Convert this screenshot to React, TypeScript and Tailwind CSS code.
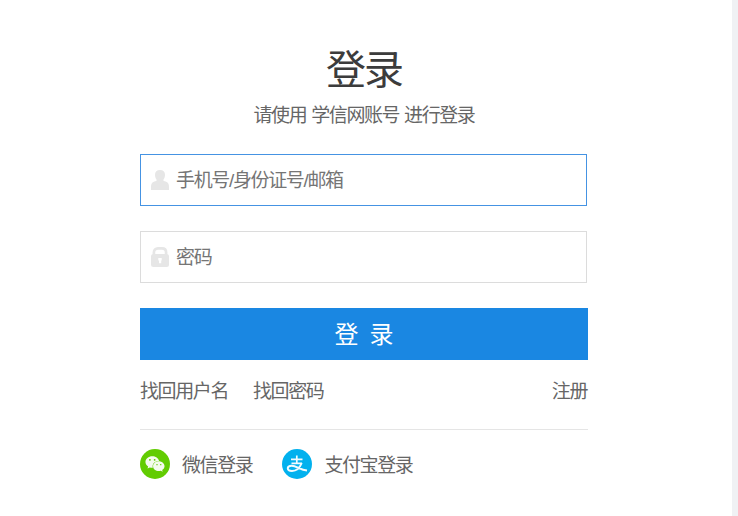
import type { ReactNode } from "react";
import { FaWeixin } from "react-icons/fa";

function UserIcon() {
  return (
    <svg className="h-5 w-[18px]" viewBox="0 0 18 20" fill="#e6e6e6">
      <path d="M9 0C12.200 0 14 2 14 4.800c0 2.300-.7 4-1.800 5.200.2.900 1 1.100 2.400 1.500C17.200 12.200 18 14 18 17v3H0v-3c0-3 .8-4.800 3.400-5.500 1.400-.4 2.200-.6 2.400-1.500C4.700 8.800 4 7.100 4 4.800 4 2 5.800 0 9 0Z" />
    </svg>
  );
}

function LockIcon() {
  return (
    <svg className="h-5 w-[18px]" viewBox="0 0 18 20">
      <path d="M2.900 9V5.500C2.900 3 4.500 1.400 7 1.400h4c2.500 0 4.100 1.600 4.100 4.100V9" fill="none" stroke="#e6e6e6" strokeWidth="2.700" />
      <rect y="7" width="18" height="13" rx="2.500" fill="#e6e6e6" />
      <path d="M7.300 11h3.400v2.200l-.5.500v2.600H8v-2.600l-.7-.5Z" fill="#fff" />
    </svg>
  );
}

function WechatIcon() {
  return (
    <span className="flex size-[30px] items-center justify-center rounded-full bg-[#62cc02]">
      <FaWeixin className="size-[20px] text-[#f4fbee]" />
    </span>
  );
}

function AlipayIcon() {
  return (
    <svg className="size-[30px]" viewBox="0 0 30 30" fill="none" stroke="#f2fbfe">
      <circle cx="15" cy="15" r="15" fill="#02b1ee" stroke="none" />
      <path d="M9 10.400h11.500M9.500 14.300h10.500M14.800 6.500v8" strokeWidth="1.700" />
      <path d="M19.700 14c-1.700 4.300-5.200 8-9.700 8-2.600 0-4.200-1.200-4.200-2.700 0-1.600 1.700-2.500 3.900-2.500 4.600 0 8.300 3.800 15.300 4.800" strokeWidth="2" />
    </svg>
  );
}

function Field({ icon, placeholder, type, active }: { icon: ReactNode; placeholder: string; type: string; active?: boolean }) {
  return (
    <label className={`flex h-[52px] w-[447px] items-center border pl-[10px] ${active ? "border-[#4593e3]" : "border-[#dcdcdc]"}`}>
      {icon}
      <input
        type={type}
        placeholder={placeholder}
        className="ml-[7px] h-[50px] flex-1 bg-transparent pt-[2px] tracking-[-1.350px] outline-none placeholder:text-[#757575]"
      />
    </label>
  );
}

export default function App() {
  return (
    <div className="flex h-[516px] justify-between bg-white font-['Liberation_Sans','Noto_Sans_CJK_SC',sans-serif] text-[19px] tracking-[-1.400px] text-[#666]">
      <main className="ml-[140px] w-[448px]">
        <h1 className="mt-[40px] h-[60px] text-center text-[40px] leading-[60px] tracking-[-2px] text-[#3c3c3c]">登录</h1>
        <p className="mt-px h-[30px] text-center leading-[30px] [word-spacing:1px]">请使用 学信网账号 进行登录</p>
        <form className="mt-[23px] flex flex-col gap-[25px]">
          <Field icon={<UserIcon />} type="text" placeholder="手机号/身份证号/邮箱" active />
          <Field icon={<LockIcon />} type="password" placeholder="密码" />
          <button type="button" className="flex h-[52px] w-full items-center justify-center gap-[11px] bg-[#1a87e2] pt-px text-[24px] tracking-normal text-white">
            <span>登</span>
            <span>录</span>
          </button>
        </form>
        <nav className="flex h-[70px] items-start border-b border-[#e5e5e5] pt-[17px] leading-[30px]">
          <a>找回用户名</a>
          <a className="ml-[25px]">找回密码</a>
          <a className="mr-px ml-auto">注册</a>
        </nav>
        <div className="mt-[19px] flex h-[30px] items-center leading-[30px]">
          <WechatIcon />
          <a className="ml-[12px] pt-[3px]">微信登录</a>
          <span className="ml-[30px] flex"><AlipayIcon /></span>
          <a className="ml-[12px] pt-[3px]">支付宝登录</a>
        </div>
      </main>
      <aside className="w-[6px] bg-[#f0f1f4]" />
    </div>
  );
}
